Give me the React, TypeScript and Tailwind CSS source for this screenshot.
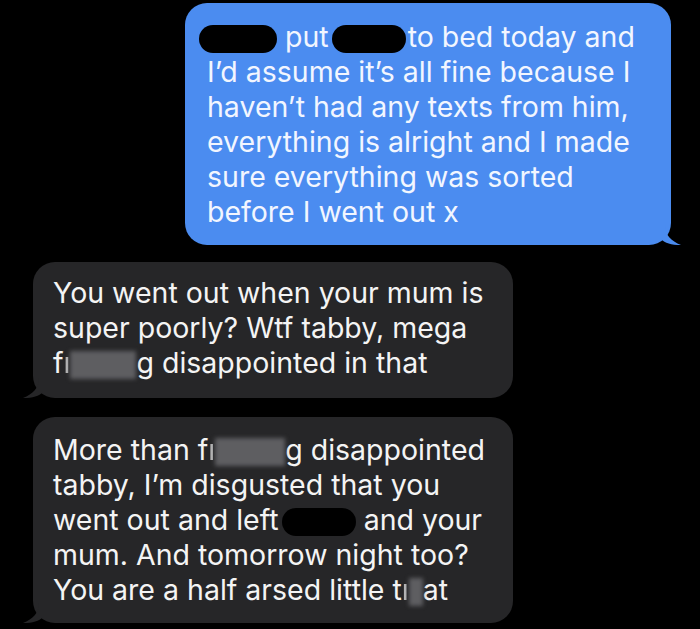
import React from "react";

const Blob = ({ w, className = "" }: { w: number; className?: string }) => (
  <span
    className={"inline-block align-middle h-[28px] rounded-[14px] bg-black -my-2 " + className}
    style={{ width: w }}
  />
);

const Blur = ({ w }: { w: number }) => (
  <span
    className="inline-block align-middle h-[28px] -my-2 bg-[#5e5e61] blur-[2px]"
    style={{ width: w }}
  />
);

export default function App() {
  return (
    <div
      className="w-[700px] h-[629px] bg-black overflow-hidden flex flex-col text-[28.5px] leading-[35px]"
      style={{ fontFamily: "Inter, 'Liberation Sans', sans-serif" }}
    >
      <div className="relative ml-[185px] mt-[3px] w-[486px] h-[242px] rounded-[22px] bg-[#4b8cf0] text-[#f2f6ff] pl-[22px] pt-[16px] whitespace-nowrap">
        <div>
          <Blob w={78} className="-ml-[8px]" /> put<Blob w={74} className="ml-[3px] mr-[2px]" />to bed today and
        </div>
        <div>I’d assume it’s all fine because I</div>
        <div>haven’t had any texts from him,</div>
        <div>everything is alright and I made</div>
        <div>sure everything was sorted</div>
        <div>before I went out x</div>
        <svg className="absolute right-[-10px] bottom-0" width="20" height="20" viewBox="0 0 20 20">
          <path d="M0 0 L4 0 C4 10 10 16 20 20 C10 20 4 18 0 14 Z" fill="#4b8cf0" />
        </svg>
      </div>

      <div className="relative ml-[33px] mt-[17px] w-[480px] h-[136px] rounded-[22px] bg-[#262628] text-[#f4f4f4] pl-[20px] pt-[13px] whitespace-nowrap">
        <div>You went out when your mum is</div>
        <div>super poorly? Wtf tabby, mega</div>
        <div>
          f<span className="opacity-70">ı</span>
          <Blur w={66} />g disappointed in that
        </div>
        <svg className="absolute left-[-10px] bottom-0" width="20" height="20" viewBox="0 0 20 20">
          <path d="M20 0 L16 0 C16 10 10 16 0 20 C10 20 16 18 20 14 Z" fill="#262628" />
        </svg>
      </div>

      <div className="relative ml-[33px] mt-[19px] w-[480px] h-[206px] rounded-[22px] bg-[#262628] text-[#f4f4f4] pl-[20px] pt-[15px] whitespace-nowrap">
        <div>
          More than f<span className="opacity-70">ı</span>
          <Blur w={70} />g disappointed
        </div>
        <div>tabby, I’m disgusted that you</div>
        <div>
          went out and left<Blob w={74} className="ml-[3px] bg-[#0b0b0b]" /> and your
        </div>
        <div>mum. And tomorrow night too?</div>
        <div>
          You are a half arsed little t<span className="opacity-70">ı</span>
          <Blur w={14} />at
        </div>
        <svg className="absolute left-[-10px] bottom-0" width="20" height="20" viewBox="0 0 20 20">
          <path d="M20 0 L16 0 C16 10 10 16 0 20 C10 20 16 18 20 14 Z" fill="#262628" />
        </svg>
      </div>
    </div>
  );
}
